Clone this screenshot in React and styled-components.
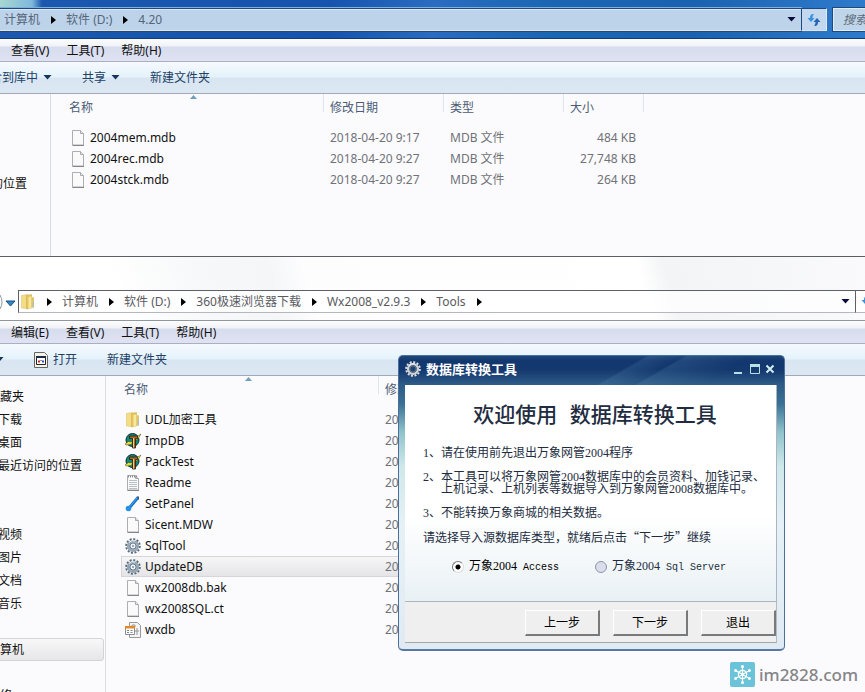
import React, { useState } from "react";
import styled, { createGlobalStyle } from "styled-components";

const GlobalStyle = createGlobalStyle`
  * {
    box-sizing: border-box;
  }
  body {
    margin: 0;
    background: #fbfbfd;
    color: #111;
    font-family: "Noto Sans", "Noto Sans CJK SC", sans-serif;
    font-size: 12px;
    line-height: 16px;
  }
  button, input {
    font: inherit;
    color: inherit;
  }
`;

const Desktop = styled.div`
  position: relative;
  display: flex;
  flex-direction: column;
  height: 100vh;
  overflow: hidden;
`;

/* ---------- explorer ---------- */
const Explorer = styled.section`
  display: flex;
  flex-direction: column;
  flex: ${(p) => (p.$fill ? "1 0 auto" : "none")};
  border-bottom: ${(p) => (p.$fill ? "none" : "1px solid #5c5e62")};
`;
const GlassBar = styled.header`
  display: flex;
  overflow: hidden;
  padding: ${(p) => (p.$light ? "33px 0 7px" : "8px 0 7px")};
  border-bottom: 1px solid ${(p) => (p.$light ? "#8f979f" : "#0d3c7c")};
  background: ${(p) =>
    p.$light
      ? "linear-gradient(75deg, #fff 0 14%, #f7f8f9 24%, #f5f6f8 32%, #fdfdfe 36%, #fff 74%, #f3f4f5 77%, #fafafc 100%)"
      : "linear-gradient(90deg, #a8d8d0 0, #7fb8dc 32px, transparent 42px) top / 100% 8px no-repeat, linear-gradient(90deg, #1c58ae 0, #1553ae 38%, #2a6cc0 50%, #1a66b2 64%, #1a62b0 80%, #2f7bcb 100%)"};
`;
const HistoryPart = styled.button`
  display: flex;
  align-items: center;
  width: 18px;
  height: 23px;
  padding: 0;
  border: 0;
  background: none;
`;
const AddressBar = styled.nav`
  display: flex;
  align-items: center;
  flex: 1;
  height: 23px;
  padding-left: ${(p) => (p.$light ? "1px" : "4px")};
  border: 1px solid ${(p) => (p.$light ? "#5d6166" : "#1c4a80")};
  border-bottom-color: ${(p) => (p.$light ? "#b4b8bc" : "#e8e4dc")};
  border-left-width: ${(p) => (p.$light ? "1px" : "0")};
  background: ${(p) => (p.$light ? "rgba(255, 255, 255, 0.7)" : "#bdd3ea")};
  box-shadow: ${(p) => (p.$light ? "none" : "inset 0 1px #dbe7f2, 0 1px #1b4b84, 0 -1px #7db0dc")};
`;
const Crumb = styled.a`
  color: ${(p) => (p.$light ? "#5a5a5e" : "#55657a")};
  text-decoration: none;
  white-space: nowrap;
`;
const CrumbArrow = styled.svg`
  flex: none;
  width: 5px;
  height: 8px;
  margin: 0 10px 0 11px;
`;
const AddressDrop = styled.button`
  display: flex;
  margin-left: auto;
  padding: 0 5px;
  border: 0;
  background: none;
`;
const Refresh = styled.button`
  display: flex;
  align-items: center;
  justify-content: center;
  flex: none;
  width: 25px;
  height: 23px;
  margin-right: ${(p) => (p.$light ? "-16px" : "6px")};
  padding: 0;
  border: 1px solid ${(p) => (p.$light ? "#5d6166" : "#e0ebf5")};
  border-left: 0;
  border-top-color: ${(p) => (p.$light ? "#5d6166" : "#1c4a80")};
  border-bottom-color: ${(p) => (p.$light ? "#b4b8bc" : "#e8e4dc")};
  background: ${(p) => (p.$light ? "#fff" : "#c3d8ee")};
`;
const Search = styled.input`
  width: 32px;
  height: 23px;
  padding: 0 0 0 9px;
  border: 1px solid #e3edf6;
  border-right: 0;
  background: #bfd5ea;
  box-shadow: 0 0 0 1px #1c4a80;
  font-style: italic;
  &::placeholder {
    color: #5f6c7c;
    opacity: 1;
  }
`;

const MenuBar = styled.div`
  display: flex;
  align-items: center;
  gap: 17px;
  height: 23px;
  padding: 2px 0 0 11px;
  border-bottom: 1px solid #a9b0c4;
  background: linear-gradient(#fdfdfe 0, #f1f2f6 7px, #d8ddee 8px, #dfe2f3 100%);
`;
const MenuItem = styled.button`
  padding: 0;
  border: 0;
  background: none;
  white-space: nowrap;
`;
const ToolBar = styled.div`
  display: flex;
  align-items: center;
  gap: 30px;
  height: 32px;
  overflow: hidden;
  border-bottom: 1px solid #9fa9b9;
  background: linear-gradient(#f6fafe 0, #e4f2fb 15px, #d9e6f2 16px, #dbe7f3 100%);
`;
const ToolButton = styled.button`
  display: flex;
  align-items: center;
  flex: none;
  gap: 5px;
  margin-left: ${(p) => p.$cut || 0}px;
  padding: 0;
  border: 0;
  background: none;
  color: #223f66;
`;

const Panes = styled.div`
  display: flex;
  flex: 1;
  min-height: ${(p) => p.$min || 0}px;
`;
const Sidebar = styled.nav`
  flex: none;
  width: ${(p) => p.$width}px;
  overflow: hidden;
  border-right: 1px solid #d6dde8;
  padding-top: ${(p) => p.$top}px;
`;
const SideGroup = styled.div`
  margin-bottom: ${(p) => p.$gap}px;
`;
const SideLink = styled.a`
  display: block;
  height: 23px;
  padding: 4px 0 3px;
  margin-left: ${(p) => p.$shift}px;
  color: #111;
  text-decoration: none;
  white-space: nowrap;
`;
const CurrentSide = styled(SideLink)`
  margin-right: 1px;
  border: 1px solid #d4d4d8;
  border-radius: 3px;
  background: linear-gradient(#f8f8f9, #e6e6e8);
  line-height: 14px;
`;

const FileTable = styled.table`
  align-self: flex-start;
  table-layout: fixed;
  width: 578px;
  margin-left: 15px;
  border-collapse: separate;
  border-spacing: 0;
`;
const HeadCell = styled.th`
  position: relative;
  height: 33px;
  padding: 6px 0 0 ${(p) => (p.$first ? 3 : 6)}px;
  background: linear-gradient(#dfe4ee, #dfe4ee) right top / 1px 18px no-repeat;
  color: #4b5c76;
  font-weight: normal;
  text-align: left;
  vertical-align: top;
`;
const SortMark = styled.svg`
  position: absolute;
  top: 1px;
  left: calc(50% - 5px);
`;
const FileRow = styled.tr`
  height: 21px;
  background: ${(p) => (p.$selected ? "linear-gradient(#f7f7f8, #e4e4e6)" : "none")};
  box-shadow: ${(p) => (p.$selected ? "inset 0 0 0 1px #d6d6da" : "none")};
`;
const Cell = styled.td`
  padding: 0 8px 0 6px;
  color: #707278;
  text-align: ${(p) => (p.$right ? "right" : "left")};
  white-space: nowrap;
`;
const NameCell = styled.td`
  padding: 0 0 0 4px;
`;
const FileName = styled.span`
  display: flex;
  align-items: center;
  gap: 4px;
  white-space: nowrap;
  svg {
    flex: none;
  }
`;

/* ---------- dialog ---------- */
const Dialog = styled.section`
  position: absolute;
  left: 398px;
  top: 355px;
  width: 387px;
  padding: 0 7px 6px 6px;
  border: 1px solid #4a6f9c;
  border-bottom: 2px solid #5778a3;
  border-radius: 5px;
  background: linear-gradient(#1f4678 0, #12376f 5px, #14396f 14px, #2d5a86 28px, #3c7196 48px, #8fc3ca 76px, #cfe8ea 110px, #e6f1f6 170px, #dfeaf3 100%);
`;
const TitleBar = styled.header`
  display: flex;
  align-items: center;
  gap: 5px;
  height: 29px;
  padding: 0 2px 3px 0;
  color: #fff;
  background: linear-gradient(150deg, transparent 57%, rgba(120, 170, 200, 0.15) 58%, transparent 66%, rgba(120, 170, 200, 0.15) 67%, transparent 82%);
`;
const DialogName = styled.h2`
  flex: 1;
  margin: 0;
  font-size: 13px;
`;
const WindowButton = styled.button`
  display: flex;
  padding: 0;
  border: 0;
  background: none;
`;
const DialogBody = styled.div`
  padding: 20px 9px 28px 18px;
  border-right: 1px solid #a9b6c2;
  border-bottom: 1px solid #a9b6c2;
  background: linear-gradient(#fff 0, #fff 60%, #e9f1f5 100%);
  color: #222c40;
  font-family: "Liberation Serif", "Noto Sans CJK SC", serif;
  line-height: 12px;
`;
const Welcome = styled.h1`
  margin: 0 0 18px;
  font-family: "Liberation Mono", "Noto Sans CJK SC", monospace;
  font-size: 21px;
  font-weight: 500;
  line-height: 24px;
  text-align: center;
  white-space: nowrap;
`;
const Note = styled.p`
  margin: 0 0 12px;
  padding-left: 18px;
  text-indent: -18px;
  white-space: nowrap;
`;
const Prompt = styled.p`
  margin: 0 0 18px;
  font-family: "Noto Sans CJK SC", sans-serif;
  white-space: nowrap;
`;
const Choices = styled.div`
  display: flex;
  gap: 36px;
  padding-left: 29px;
`;
const Choice = styled.label`
  display: flex;
  align-items: center;
  gap: 5px;
  height: 12px;
  color: ${(p) => (p.$on ? "#000" : "#222c40")};
  white-space: pre;
`;
const Radio = styled.input`
  appearance: none;
  width: 12px;
  height: 12px;
  margin: 0;
  border: 1px solid #8d97ac;
  border-radius: 50%;
  background: #d9deea;
  &:checked {
    border-color: #777 #ddd #ddd #777;
    background: radial-gradient(circle, #000 0 2px, #fff 3px);
  }
`;
const Latin = styled.span`
  font-family: "Liberation Mono", monospace;
  font-size: 10px;
`;
const DialogFooter = styled.footer`
  display: flex;
  justify-content: flex-end;
  gap: 13px;
  padding: 8px 0 6px;
  border-bottom: 1px solid #a3a6a8;
  border-right: 1px solid #b5babd;
  background: #efefef;
`;
const PushButton = styled.button`
  width: 75px;
  height: 26px;
  padding: 0;
  border: 1px solid;
  border-width: 1px 2px 2px 1px;
  border-color: #fff #77797b #77797b #fff;
  background: #efefef;
  color: #000;
`;

const Watermark = styled.a`
  position: absolute;
  right: 7px;
  bottom: 5px;
  display: flex;
  align-items: center;
  gap: 4px;
  color: #858587;
  font-family: "Noto Sans", sans-serif;
  font-size: 17px;
  font-weight: 500;
  line-height: 25px;
  text-decoration: none;
`;

/* ---------- icons ---------- */
function Right() {
  return (
    <CrumbArrow viewBox="0 0 5 8">
      <path d="M0 0l5 4-5 4z" fill="#000" />
    </CrumbArrow>
  );
}

function Down({ color = "#15355c" }) {
  return (
    <svg width="9" height="5" viewBox="0 0 9 5">
      <path d="M.5 0h8l-4 4.500z" fill={color} />
    </svg>
  );
}

function RefreshIcon() {
  return (
    <svg width="14" height="14" viewBox="0 0 14 14">
      <path d="M6 1C4 1 3 2.500 3 5H.5l3.500 4 3.500-4H5.500C5.500 3 6 2 7 1.500z" fill="#3993dc" />
      <path d="M8 13c2 0 3-1.500 3-4h2.500l-3.500-4-3.500 4h2c0 2-.5 3-1.500 3.500z" fill="#2465b4" />
    </svg>
  );
}

function FolderIcon() {
  return (
    <svg width="16" height="16" viewBox="0 0 16 16">
      <path d="M1.500 1.500l6-1v14l-6-.5z" fill="#f4dd86" stroke="#dfc468" strokeWidth=".6" />
      <path d="M6.500 1.500l5-1v13.500l-5 1z" fill="#e3c65e" stroke="#cfae4c" strokeWidth=".6" />
      <path d="M8.500 3l3-.5v11.500l-3 1z" fill="#f7e7a0" />
      <path d="M11.500 3l2.500.500v10l-2.500.500z" fill="#dfc366" />
      <path d="M13.500 8v5" stroke="#9cc0d8" />
    </svg>
  );
}

function PageIcon({ lines }) {
  return (
    <svg width="16" height="16" viewBox="0 0 16 16">
      <path d="M2.500.5h8l3 3v11.500h-11z" fill="#fafafb" stroke="#aeaeb2" />
      <path d="M2.500 15.500h11.500" stroke="#85858a" />
      <path d="M10.500.5v3h3" fill="#e8e8ec" stroke="#a8a8ac" />
      {lines && (
        <g>
          <path d="M4 5.500h8M4 7.500h8M4 9.500h8M4 11.500h8M4 13.500h8" stroke="#b8bfc5" />
          <path d="M3 1.500h10" stroke="#8a8a8a" strokeDasharray="1 1" strokeWidth="2" />
        </g>
      )}
    </svg>
  );
}

function SetupIcon() {
  return (
    <svg width="16" height="16" viewBox="0 0 16 16">
      <circle cx="7.500" cy="7" r="6.500" fill="#12877c" stroke="#0b2f2c" />
      <path d="M0 11l3.500-2.500L6.500 9l4-4.500L16 1l-3.500 5.500-3 1L6 11.500 1.500 12z" fill="#e8e23c" stroke="#3c420e" strokeWidth=".5" />
      <path d="M4.500 3h8v2.500h-2V15h-3V5.500h-3z" fill="#a86a28" stroke="#2b1a0a" strokeWidth=".8" />
      <path d="M8.500 5v9.500" stroke="#e8cf7a" />
    </svg>
  );
}

function BrushIcon() {
  return (
    <svg width="16" height="16" viewBox="0 0 16 16">
      <path d="M13 1.500L5 11" stroke="#1673c8" strokeWidth="3" />
      <path d="M12 2L5 10.500" stroke="#45a6ee" />
      <path d="M12 .5l2 1.500M13.500 .5v3" stroke="#3b566e" />
      <circle cx="3.500" cy="12.500" r="2.800" fill="#2690e6" />
    </svg>
  );
}

function GearIcon({ light }) {
  const body = light ? "#cfd3d6" : "#94a5b3";
  return (
    <svg width="16" height="16" viewBox="0 0 16 16">
      <circle cx="8" cy="8" r="6.800" fill="none" stroke={light ? "#dfe2e4" : "#5a6c7b"} strokeWidth="2" strokeDasharray="2 1.560" />
      <circle cx="8" cy="8" r="4.900" fill="none" stroke={body} strokeWidth="2.400" />
      <circle cx="8" cy="8" r="3.200" fill={light ? "#1c4274" : "#eef3f7"} stroke={light ? "#777f88" : "#4b6078"} />
      {!light && <circle cx="8" cy="8" r="1" fill="#7d92a6" />}
      <path d="M4 4.500a5.500 5.500 0 0 1 6-1.500" fill="none" stroke="#f4f6f7" />
    </svg>
  );
}

function UdlIcon() {
  return (
    <svg width="16" height="16" viewBox="0 0 16 16">
      <path d="M4.500.5h8l3 3v12h-11z" fill="#f4f4f4" stroke="#999" />
      <path d="M7 3h3v2H7zM12 6v7M10 9h4" fill="none" stroke="#999" />
      <path d="M.5 4.500h9v8h-9z" fill="#fff" stroke="#8b8b8b" />
      <path d="M0 4h10v2.500H0z" fill="#e38a28" />
      <path d="M2 8.500h2M5.500 8.500h2M2 10.500h2M5.500 10.500h2" stroke="#71879b" />
    </svg>
  );
}

function AppIcon() {
  return (
    <svg width="14" height="16" viewBox="0 0 14 16">
      <path d="M.5.5h10l3 3v12H.5z" fill="#f5f4e8" stroke="#666" />
      <path d="M2.500 4.500h9v8h-9z" fill="#fff" stroke="#222" />
      <path d="M2 4h10v2H2z" fill="#1c2a4c" />
      <path d="M4 9.500h2" stroke="#c42c2c" strokeWidth="2" />
      <path d="M6.500 8.500h1" stroke="#222" />
      <path d="M8 9.500h2" stroke="#2d4fbd" strokeWidth="2" />
    </svg>
  );
}

function SnowLogo() {
  return (
    <svg width="25" height="25" viewBox="0 0 25 25">
      <rect width="25" height="25" rx="2" fill="#6ac3d8" />
      <g fill="none" stroke="#fff" strokeWidth="1.200">
        <circle cx="12.500" cy="12.500" r="4.200" />
        {[0, 60, 120, 180, 240, 300].map((a) => (
          <g key={a} transform={`rotate(${a} 12.500 12.500)`}>
            <path d="M12.500 12.500V4.500" />
            <circle cx="12.500" cy="4.500" r=".9" fill="#fff" />
          </g>
        ))}
      </g>
      <circle cx="12.500" cy="12.500" r="1.300" fill="#fff" />
    </svg>
  );
}

const ICONS = {
  folder: <FolderIcon />,
  page: <PageIcon />,
  text: <PageIcon lines />,
  setup: <SetupIcon />,
  brush: <BrushIcon />,
  gear: <GearIcon />,
  udl: <UdlIcon />,
};

/* ---------- data ---------- */
const backupFiles = [
  { name: "2004mem.mdb", icon: "page", date: "2018-04-20 9:17", type: "MDB 文件", size: "484 KB" },
  { name: "2004rec.mdb", icon: "page", date: "2018-04-20 9:27", type: "MDB 文件", size: "27,748 KB" },
  { name: "2004stck.mdb", icon: "page", date: "2018-04-20 9:27", type: "MDB 文件", size: "264 KB" },
];

const toolFiles = [
  { name: "UDL加密工具", icon: "folder", date: "2018" },
  { name: "ImpDB", icon: "setup", date: "2018" },
  { name: "PackTest", icon: "setup", date: "2018" },
  { name: "Readme", icon: "text", date: "2018" },
  { name: "SetPanel", icon: "brush", date: "2018" },
  { name: "Sicent.MDW", icon: "page", date: "2018" },
  { name: "SqlTool", icon: "gear", date: "2018" },
  { name: "UpdateDB", icon: "gear", date: "2018", selected: true },
  { name: "wx2008db.bak", icon: "page", date: "2018" },
  { name: "wx2008SQL.ct", icon: "page", date: "2018" },
  { name: "wxdb", icon: "udl", date: "2018" },
];

function Crumbs({ items, light }) {
  return items.map((item, i) => (
    <React.Fragment key={item}>
      {i > 0 && <Right />}
      <Crumb href="#" $light={light}>
        {item}
      </Crumb>
    </React.Fragment>
  ));
}

function Menus({ items }) {
  return (
    <MenuBar>
      {items.map((item) => (
        <MenuItem key={item}>{item}</MenuItem>
      ))}
    </MenuBar>
  );
}

function Files({ files, columns }) {
  return (
    <FileTable>
      <colgroup>
        <col />
        <col width="120" />
        <col width="120" />
        <col width="80" />
      </colgroup>
      <thead>
        <tr>
          {columns.map((column, i) => (
            <HeadCell key={column} $first={i === 0}>
              {column}
              {i === 0 && (
                <SortMark width="7" height="4" viewBox="0 0 7 4">
                  <path d="M0 4l3.500-4L7 4z" fill="#6f9fb8" />
                </SortMark>
              )}
            </HeadCell>
          ))}
        </tr>
      </thead>
      <tbody>
        {files.map((file) => (
          <FileRow key={file.name} $selected={file.selected}>
            <NameCell>
              <FileName>
                {ICONS[file.icon]}
                {file.name}
              </FileName>
            </NameCell>
            <Cell>{file.date}</Cell>
            <Cell>{file.type}</Cell>
            <Cell $right>{file.size}</Cell>
          </FileRow>
        ))}
      </tbody>
    </FileTable>
  );
}

function BackupWindow() {
  return (
    <Explorer>
      <GlassBar>
        <AddressBar>
          <Crumbs items={["计算机", "软件 (D:)", "4.20"]} />
          <AddressDrop aria-label="历史记录">
            <Down color="#0a0a3c" />
          </AddressDrop>
        </AddressBar>
        <Refresh aria-label="刷新">
          <RefreshIcon />
        </Refresh>
        <Search placeholder="搜索" aria-label="搜索" />
      </GlassBar>
      <Menus items={["查看(V)", "工具(T)", "帮助(H)"]} />
      <ToolBar>
        <ToolButton $cut={-22}>
          包含到库中
          <Down />
        </ToolButton>
        <ToolButton>
          共享
          <Down />
        </ToolButton>
        <ToolButton>新建文件夹</ToolButton>
      </ToolBar>
      <Panes $min={162}>
        <Sidebar $width={51} $top={78}>
          <SideLink href="#" $shift={-57}>
            最近访问的位置
          </SideLink>
        </Sidebar>
        <Files files={backupFiles} columns={["名称", "修改日期", "类型", "大小"]} />
      </Panes>
    </Explorer>
  );
}

function ToolsWindow() {
  return (
    <Explorer $fill>
      <GlassBar $light>
        <HistoryPart aria-label="最近浏览">
          <svg width="16" height="20" viewBox="0 0 16 20">
            <path d="M0 3q4 7 0 14" fill="none" stroke="#8b98a5" />
            <path d="M6 9h9l-4.500 5z" fill="#2f86c4" stroke="#1b4f80" />
          </svg>
        </HistoryPart>
        <AddressBar $light>
          <FolderIcon />
          <Right />
          <Crumbs light items={["计算机", "软件 (D:)", "360极速浏览器下载", "Wx2008_v2.9.3", "Tools"]} />
          <Right />
          <AddressDrop aria-label="历史记录">
            <Down color="#0a0a3c" />
          </AddressDrop>
        </AddressBar>
        <Refresh $light aria-label="刷新">
          <RefreshIcon />
        </Refresh>
      </GlassBar>
      <Menus items={["编辑(E)", "查看(V)", "工具(T)", "帮助(H)"]} />
      <ToolBar>
        <ToolButton $cut={-5} aria-label="组织">
          <Down />
        </ToolButton>
        <ToolButton>
          <AppIcon />
          打开
        </ToolButton>
        <ToolButton>新建文件夹</ToolButton>
      </ToolBar>
      <Panes>
        <Sidebar $width={106} $top={9}>
          <SideGroup $gap={46}>
            <SideLink href="#" $shift={-12}>收藏夹</SideLink>
            <SideLink href="#" $shift={-2}>下载</SideLink>
            <SideLink href="#" $shift={-2}>桌面</SideLink>
            <SideLink href="#" $shift={-2}>最近访问的位置</SideLink>
          </SideGroup>
          <SideGroup $gap={23}>
            <SideLink href="#" $shift={-2}>视频</SideLink>
            <SideLink href="#" $shift={-2}>图片</SideLink>
            <SideLink href="#" $shift={-2}>文档</SideLink>
            <SideLink href="#" $shift={-2}>音乐</SideLink>
          </SideGroup>
          <SideGroup $gap={23}>
            <CurrentSide href="#" $shift={-13}>计算机</CurrentSide>
          </SideGroup>
          <SideLink href="#" $shift={-12}>网络</SideLink>
        </Sidebar>
        <Files files={toolFiles} columns={["名称", "修改日期"]} />
      </Panes>
    </Explorer>
  );
}

function ConvertDialog() {
  const [source, setSource] = useState("access");
  return (
    <Dialog role="dialog" aria-labelledby="dialog-name">
      <TitleBar>
        <GearIcon light />
        <DialogName id="dialog-name">数据库转换工具</DialogName>
        <WindowButton aria-label="最小化">
          <svg width="12" height="10" viewBox="0 0 12 10">
            <path d="M1 9h8" stroke="#b9dfe6" strokeWidth="2" />
          </svg>
        </WindowButton>
        <WindowButton aria-label="最大化">
          <svg width="10" height="10" viewBox="0 0 10 10">
            <path d="M.5 1h9v8.500h-9z" fill="none" stroke="#b9dfe6" />
            <path d="M0 1.500h10" stroke="#b9dfe6" strokeWidth="3" />
          </svg>
        </WindowButton>
        <WindowButton aria-label="关闭">
          <svg width="10" height="10" viewBox="0 0 10 10">
            <path d="M1.500 1.500l7 7M8.500 1.500l-7 7" stroke="#d3eef0" strokeWidth="2" />
          </svg>
        </WindowButton>
      </TitleBar>
      <DialogBody>
        <Welcome>欢迎使用 数据库转换工具</Welcome>
        <Note>1、请在使用前先退出万象网管2004程序</Note>
        <Note>
          2、本工具可以将万象网管2004数据库中的会员资料、加钱记录、
          <br />
          上机记录、上机列表等数据导入到万象网管2008数据库中。
        </Note>
        <Note>3、不能转换万象商城的相关数据。</Note>
        <Prompt>请选择导入源数据库类型，就绪后点击“下一步”继续</Prompt>
        <Choices role="radiogroup">
          <Choice $on={source === "access"}>
            <Radio type="radio" name="source" checked={source === "access"} onChange={() => setSource("access")} />
            <span>
              万象2004<Latin> Access</Latin>
            </span>
          </Choice>
          <Choice $on={source === "sql"}>
            <Radio type="radio" name="source" checked={source === "sql"} onChange={() => setSource("sql")} />
            <span>
              万象2004<Latin> Sql Server</Latin>
            </span>
          </Choice>
        </Choices>
      </DialogBody>
      <DialogFooter>
        <PushButton>上一步</PushButton>
        <PushButton>下一步</PushButton>
        <PushButton>退出</PushButton>
      </DialogFooter>
    </Dialog>
  );
}

export default function App() {
  return (
    <>
      <GlobalStyle />
      <Desktop>
        <BackupWindow />
        <ToolsWindow />
        <ConvertDialog />
        <Watermark href="#">
          <SnowLogo />
          im2828.com
        </Watermark>
      </Desktop>
    </>
  );
}
